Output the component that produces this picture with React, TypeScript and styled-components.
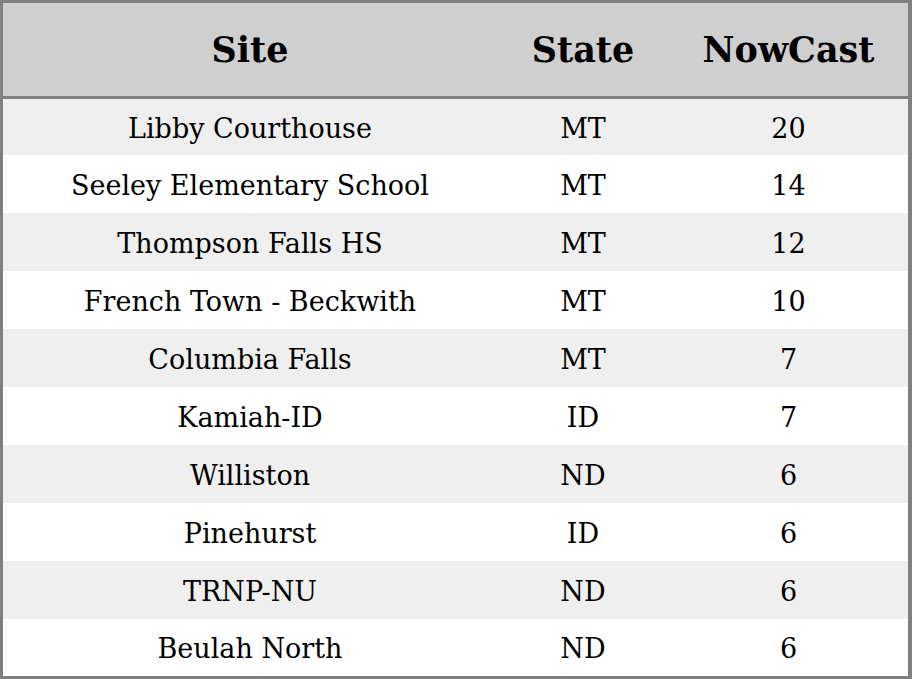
import styled, { createGlobalStyle } from "styled-components";

const GlobalStyle = createGlobalStyle`
  html, body {
    margin: 0;
    padding: 0;
    background: #ffffff;
  }
  body {
    font-family: "DejaVu Serif", "Liberation Serif", serif;
  }
`;

const Table = styled.table`
  width: 912px;
  border-collapse: separate;
  border-spacing: 0;
  border-style: solid;
  border-color: #808080;
  border-width: 3px 4px 3px 3px;
  table-layout: fixed;
  color: #000;
`;

const HeadCell = styled.th<{ $w: number }>`
  width: ${(p) => p.$w}px;
  height: 93px;
  padding: 0;
  background: #cfcfcf;
  border-bottom: 3px solid #808080;
  font-size: 35px;
  font-weight: bold;
  text-align: center;
  vertical-align: middle;
`;

const Row = styled.tr<{ $shade: boolean }>`
  background: ${(p) => (p.$shade ? "#efefef" : "#ffffff")};
`;

const Cell = styled.td<{ $h: number }>`
  height: ${(p) => p.$h}px;
  padding: 2px 0 0;
  box-sizing: border-box;
  font-size: 27px;
  line-height: 1;
  text-align: center;
  vertical-align: middle;
`;

const rows = [
  { site: "Libby Courthouse", state: "MT", now: 20 },
  { site: "Seeley Elementary School", state: "MT", now: 14 },
  { site: "Thompson Falls HS", state: "MT", now: 12 },
  { site: "French Town - Beckwith", state: "MT", now: 10 },
  { site: "Columbia Falls", state: "MT", now: 7 },
  { site: "Kamiah-ID", state: "ID", now: 7 },
  { site: "Williston", state: "ND", now: 6 },
  { site: "Pinehurst", state: "ID", now: 6 },
  { site: "TRNP-NU", state: "ND", now: 6 },
  { site: "Beulah North", state: "ND", now: 6 },
];

export default function App() {
  return (
    <>
      <GlobalStyle />
      <Table>
        <thead>
          <tr>
            <HeadCell $w={494}>Site</HeadCell>
            <HeadCell $w={172}>State</HeadCell>
            <HeadCell $w={239}>NowCast</HeadCell>
          </tr>
        </thead>
        <tbody>
          {rows.map((r, i) => {
            const h = i === 0 ? 56 : i === rows.length - 1 ? 57 : 58;
            return (
              <Row key={r.site} $shade={i % 2 === 0}>
                <Cell $h={h}>{r.site}</Cell>
                <Cell $h={h}>{r.state}</Cell>
                <Cell $h={h}>{r.now}</Cell>
              </Row>
            );
          })}
        </tbody>
      </Table>
    </>
  );
}
